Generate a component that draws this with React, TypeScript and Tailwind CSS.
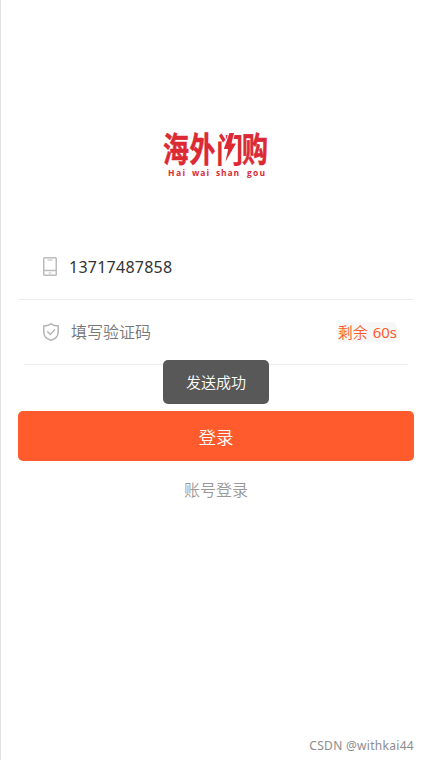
function Logo() {
  return (
    <svg
      width="108"
      height="54"
      viewBox="0 0 108 54"
      fill="#dc2a35"
      className="block overflow-visible font-['Noto_Sans_CJK_SC',sans-serif]"
      role="img"
    >
      <g fontSize="36" fontWeight="700">
        <text transform="translate(1 34) scale(0.72 0.95)" stroke="#dc2a35" strokeWidth="0.6">海</text>
        <text transform="translate(27.5 34) scale(0.72 0.95)" stroke="#dc2a35" strokeWidth="0.6">外</text>
        <text transform="translate(54 34.5) scale(0.76 0.95)">门</text>
        <text transform="translate(80 34) scale(0.72 0.95)" stroke="#dc2a35" strokeWidth="0.6">购</text>
      </g>
      <path
        d="M67.5 5H72L69.5 15.5H74L63.5 33.5L66.2 21H61.8Z"
        stroke="#fff"
        strokeWidth="2"
        paintOrder="stroke"
      />
      <g
        fontSize="8.5"
        fontWeight="700"
        className="font-['Open_Sans','Noto_Sans',sans-serif]"
      >
        <text x="6" y="48" textLength="17" lengthAdjust="spacing">Hai</text>
        <text x="30" y="48" textLength="17" lengthAdjust="spacing">wai</text>
        <text x="54" y="48" textLength="23" lengthAdjust="spacing">shan</text>
        <text x="85" y="48" textLength="18" lengthAdjust="spacing">gou</text>
      </g>
    </svg>
  );
}

function PhoneIcon() {
  return (
    <svg width="14" height="19" viewBox="0 0 14 19" fill="none" stroke="#bcbcbc" strokeWidth="1.5">
      <rect x="0.75" y="0.75" width="12.5" height="17.5" rx="0.8" />
      <path d="M0.5 13.5H13.5" />
      <path d="M4.5 3H9.5M5.5 16H8.5" strokeWidth="1" />
    </svg>
  );
}

function ShieldIcon() {
  return (
    <svg width="16" height="18" viewBox="0 0 16 18" fill="none" stroke="#b5b5b5" strokeWidth="1.5">
      <path d="M8 0.8C6 2.2 3.5 2.9 0.8 3V9C0.8 13 4 16 8 17.2C12 16 15.2 13 15.2 9V3C12.5 2.9 10 2.2 8 0.8Z" />
      <path d="M4.3 8.3L7.3 11.4L12 6.5" />
    </svg>
  );
}

export default function App() {
  return (
    <div className="relative flex h-[760px] w-[429px] flex-col border-l border-[#e2e2e2] bg-white pl-[17px] pr-[15px] font-['Noto_Sans','Noto_Sans_CJK_SC',sans-serif] font-[350]">
      <header className="flex h-[234px] justify-center pt-[128px]">
        <Logo />
      </header>

      <div className="flex h-[66px] items-center border-b border-[#ededed] pl-[25px]">
        <PhoneIcon />
        <span className="ml-[12px] text-[16px] font-normal leading-6 tracking-[0.25px] text-[#333]">13717487858</span>
      </div>

      <div className="mx-[6px] flex h-[65px] items-center border-b border-[#ededed] pl-[19px] pr-[11px]">
        <ShieldIcon />
        <span className="ml-[12px] text-[16px] leading-6 text-[#777]">填写验证码</span>
        <button className="ml-auto h-5 rounded-[5px] bg-[#f7f7f7] text-[15px] leading-5 text-[#ff5b2d]">
          剩余<span className="ml-[5px] font-normal">60s</span>
        </button>
      </div>

      <button className="mt-[46px] h-[50px] shrink-0 rounded-[5px] bg-[#ff5b2d] pt-[2px] text-[17.5px] text-white">
        登录
      </button>
      <a className="mt-[17px] text-center text-[16px] leading-6 text-[#999]">账号登录</a>

      <footer className="mt-auto mb-[4px] text-right text-[12px] font-normal leading-5 tracking-[0.3px] text-[#8c8c8c]">
        CSDN @withkai44
      </footer>

      <div className="absolute left-[162px] top-[360px] flex h-[44px] w-[106px] items-center justify-center rounded-[5px] bg-[#585858] text-[15px] text-white">
        发送成功
      </div>
    </div>
  );
}
